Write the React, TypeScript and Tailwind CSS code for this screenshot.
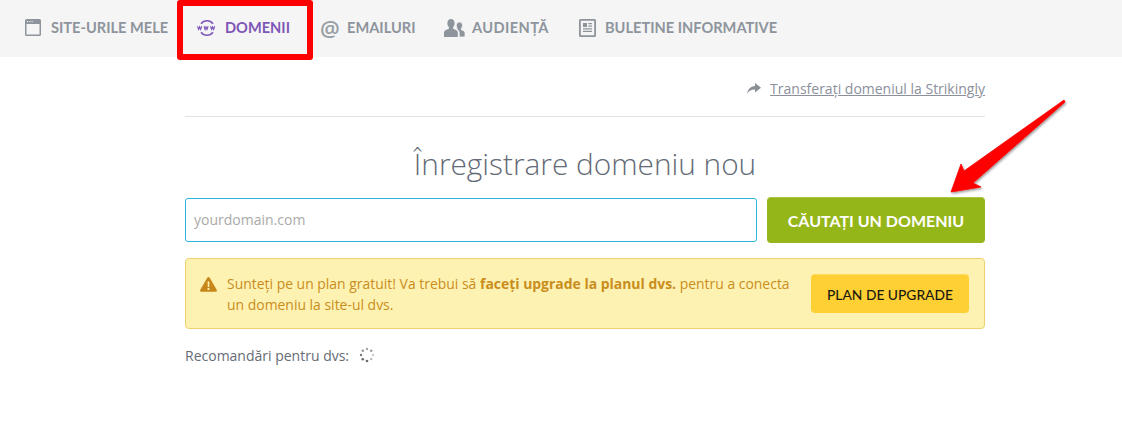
import React from "react";

function NavItem({ icon, label, active, className }: { icon: React.ReactNode; label: string; active?: boolean; className: string }) {
  return (
    <div className={`flex items-center font-['Lato',sans-serif] font-bold text-[14.6px] ${active ? "text-[#7e57b8]" : "text-[#8d949c]"} ${className}`}>
      {icon}
      <span>{label}</span>
    </div>
  );
}

const SiteIcon = (
  <svg width="16" height="17" viewBox="0 0 16 17" className="mr-[10px]">
    <path fillRule="evenodd" fill="#8d949c" d="M1.500 0h13A1.500 1.500 0 0 1 16 1.500v14a1.500 1.500 0 0 1-1.500 1.500h-13A1.500 1.500 0 0 1 0 15.500v-14A1.500 1.500 0 0 1 1.500 0zM1.500 5v10.500h13V5z" />
    <circle cx="2.500" cy="2.600" r=".7" fill="#f5f5f5" />
    <circle cx="4.800" cy="2.600" r=".7" fill="#f5f5f5" />
    <circle cx="7.100" cy="2.600" r=".7" fill="#f5f5f5" />
  </svg>
);
const WwwIcon = (
  <svg width="20" height="20" viewBox="0 0 20 20" className="mr-[8px]" fill="none" stroke="#7e57b8">
    <path d="M4 5.800A7.500 7.500 0 0 1 16 5.800" strokeWidth="1.500" />
    <path d="M4 14.200A7.500 7.500 0 0 0 16 14.200" strokeWidth="1.500" />
    <path d="M.5 8.300l1.100 3.200 1-2.600 1 2.600 1.100-3.200M7 8.300l1.100 3.200 .9-2.600 1 2.600 1.100-3.200M13.500 8.300l1.100 3.200 1-2.600 1 2.600 1.100-3.200" strokeWidth="1.100" />
  </svg>
);
const AtIcon = (
  <span className="mr-[9px] w-[18px] text-center text-[22px] leading-none font-['Open_Sans',sans-serif] font-semibold text-[#989ea5]">@</span>
);
const PeopleIcon = (
  <svg width="21" height="18" viewBox="0 0 21 18" className="mr-[7px]" fill="#8d949c">
    <path d="M7 0c2.300 0 3.600 1.800 3.600 4.200 0 1.600-.6 3-1.500 3.900v1.600c2.500.8 4.700 2 4.700 3.500V18H0v-4.800c0-1.500 2.300-2.700 4.900-3.500V8.100C4 7.200 3.400 5.800 3.400 4.200 3.400 1.800 4.700 0 7 0z" />
    <path d="M15.500 3c1.900 0 3 1.500 3 3.400 0 1.300-.5 2.400-1.200 3.100v1.300c1.900.6 3.700 1.500 3.700 2.800V18h-5.800v-4.500c0-1.200-.9-2.200-2.200-3 .1-.4.200-.7.200-1-.6-.8-.9-1.900-.9-3.100C12.300 4.500 13.600 3 15.500 3z" stroke="#f5f5f5" strokeWidth=".8" />
  </svg>
);
const NewsIcon = (
  <svg width="17" height="18" viewBox="0 0 17 18" className="mr-[9px]" fill="#8d949c">
    <path fillRule="evenodd" d="M1.500 0h14A1.500 1.500 0 0 1 17 1.500v15a1.500 1.500 0 0 1-1.500 1.500h-14A1.500 1.500 0 0 1 0 16.500v-15A1.500 1.500 0 0 1 1.500 0zM1.800 1.800v14.400h13.400V1.800z" />
    <path d="M4 4h4v4H4zM9.300 4H13v1.200H9.300zM9.300 6.500H13v1.200H9.300zM4 9.200h9v1.200H4zM4 11.800h9V13H4z" />
  </svg>
);

export default function App() {
  return (
    <div className="relative h-[443px] w-[1122px] overflow-hidden bg-white font-['Open_Sans',sans-serif]">
      <nav className="flex h-[57px] items-center bg-[#f5f5f5] pb-[1px]">
        <NavItem className="ml-[25px] w-[172px]" icon={SiteIcon} label="SITE-URILE MELE" />
        <NavItem className="w-[123px]" active icon={WwwIcon} label="DOMENII" />
        <NavItem className="w-[124px]" icon={AtIcon} label="EMAILURI" />
        <NavItem className="w-[135px] tracking-[0.4px]" icon={PeopleIcon} label="AUDIENȚĂ" />
        <NavItem className="" icon={NewsIcon} label="BULETINE INFORMATIVE" />
      </nav>

      <main className="ml-[185px] w-[800px]">
        <div className="flex h-[60px] items-center justify-end border-b border-[#e2e2e2] pt-[4px] text-[14px] text-[#8b909c]">
          <svg width="14" height="11" viewBox="0 0 14 11" className="mr-[9px]" fill="#8b8f96">
            <path d="M8 0l6 4.800L8 9.500V6.600C4.500 6.500 2 7.800 0 10.800 .7 6.500 3.300 3.300 8 2.900z" />
          </svg>
          <a className="underline">Transferați domeniul la Strikingly</a>
        </div>

        <h1 className="mt-[26px] text-center text-[29.8px] font-light leading-[42px] text-[#636a75]">Înregistrare domeniu nou</h1>

        <div className="mt-[12px] flex items-center justify-between">
          <input
            readOnly
            placeholder="yourdomain.com"
            className="h-[44px] w-[572px] rounded-[3px] border border-[#2cb5dc] px-2 pb-[2px] text-[14px] outline-none placeholder:text-[#a9a9a9]"
          />
          <button className="h-[46px] w-[218px] rounded-[4px] border-t border-[#a9c640] bg-[#95b619] font-['Lato',sans-serif] text-[16px] font-bold text-white">
            CĂUTAȚI UN DOMENIU
          </button>
        </div>

        <div className="mt-[15px] flex h-[71px] items-center rounded-[4px] border border-[#efd26f] bg-[#fef2b3] pl-[14px] pr-[15px] text-[13.95px] leading-[21px] text-[#c98d1c]">
          <svg width="17" height="15" viewBox="0 0 17 15" className="mb-[19px] mr-[10px] shrink-0">
            <path fill="#c6861a" d="M8.500 0c.5 0 .9.300 1.200.8l7 12c.5.900 0 2-1.100 2H1.400c-1.100 0-1.600-1.100-1.100-2l7-12C7.600.300 8 0 8.500 0z" />
            <path fill="#fef2b3" d="M7.600 4.500h1.800l-.2 5.500H7.800zM7.600 11h1.800v2H7.600z" />
          </svg>
          <p className="w-[570px]">
            Sunteți pe un plan gratuit! Va trebui să <b>faceți upgrade la planul dvs.</b> pentru a conecta un domeniu la site-ul dvs.
          </p>
          <button className="ml-auto h-[39px] w-[158px] rounded-[4px] border-t border-[#ffdb5e] bg-[#ffd034] font-['Lato',sans-serif] text-[13.8px] font-medium text-[#1c1a10]">
            PLAN DE UPGRADE
          </button>
        </div>

        <div className="mt-[17px] flex items-center text-[14px] leading-[20px] text-[#666c75]">
          <span>Recomandări pentru dvs:</span>
          <svg width="16" height="16" viewBox="0 0 16 16" className="mb-[2px] ml-[10px]" fill="#6a6a6a">
            <circle cx="8" cy="2" r="1.200" opacity=".6" />
            <circle cx="12.200" cy="3.800" r="1.200" opacity=".7" />
            <circle cx="14" cy="8" r="1.100" opacity=".45" />
            <circle cx="12.200" cy="12.200" r="1.100" opacity=".55" />
            <circle cx="8" cy="14" r="1.300" />
            <circle cx="3.800" cy="12.200" r="1.300" />
            <circle cx="2" cy="8" r="1.200" opacity=".9" />
            <circle cx="3.800" cy="3.800" r="1.200" opacity=".75" />
          </svg>
        </div>
      </main>

      <div className="absolute left-[177px] top-0 h-[60px] w-[136px] rounded-[3px] border-[6px] border-[#fe0000]" />

      <svg className="absolute left-[940px] top-[90px]" width="135" height="115" viewBox="940 90 135 115">
        <defs>
          <filter id="s" x="-20%" y="-20%" width="140%" height="140%">
            <feDropShadow dx="1" dy="1.500" stdDeviation="1.200" floodColor="#000" floodOpacity=".4" />
          </filter>
        </defs>
        <path
          filter="url(#s)"
          fill="#fe0000"
          stroke="#fe0000"
          strokeWidth=".8"
          strokeLinejoin="round"
          d="M1064 100L964 171 961 164 951 192 981 187 973 183 1065 102z"
        />
      </svg>
    </div>
  );
}
